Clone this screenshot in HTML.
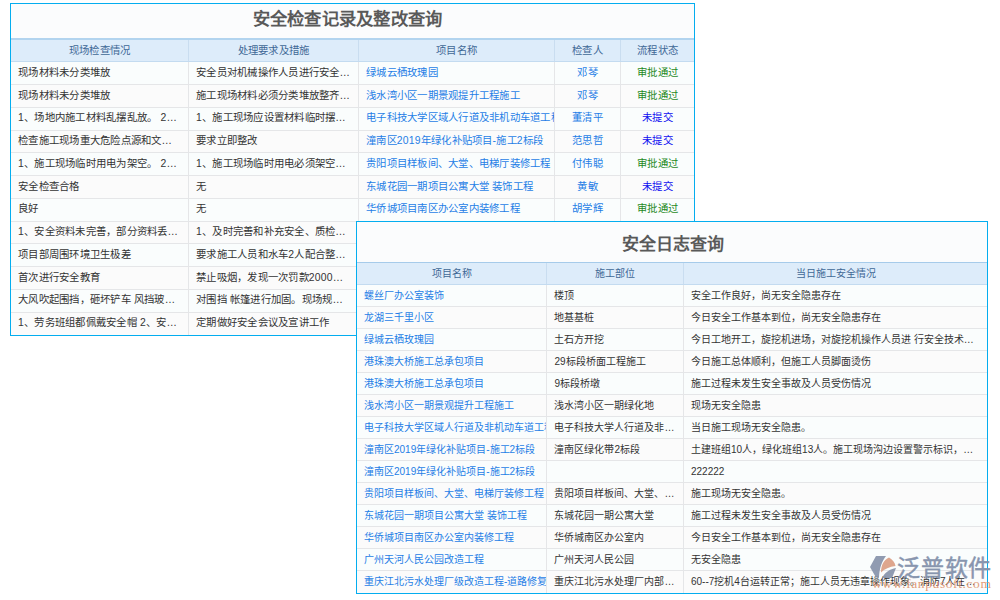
<!DOCTYPE html><html lang="zh-CN"><head><meta charset="utf-8"><style>
html,body{margin:0;padding:0;background:#fff;width:1000px;height:600px;overflow:hidden;position:relative;font-family:"Liberation Sans",sans-serif}
.p{position:absolute;box-sizing:border-box;border:1px solid #04adef;background:#fbfcfd;overflow:hidden}
.t{position:absolute;color:#595959;font-weight:bold;text-align:left;white-space:nowrap}
.h{position:absolute;color:#3f6896;text-align:center;white-space:nowrap;overflow:hidden}
.c{position:absolute;color:#333333;white-space:nowrap;overflow:hidden;box-sizing:border-box}
.lk{color:#1f7ee6}
.clip{text-overflow:clip;padding-right:0}
.ct{text-align:center}
.gr{color:#1e8a1e}
.pu{color:#0d0df0}
</style></head><body>

<div class="p" style="left:10px;top:3px;width:685px;height:333px;z-index:1">
<div class="t" style="left:241.5px;top:-5.5px;height:40px;line-height:40px;font-size:17.3px;letter-spacing:0.25px">安全检查记录及整改查询</div>
<div style="position:absolute;left:0;top:34px;width:683px;height:23.299999999999997px;background:#ddecfa;border-top:2px solid #b2d4ef;box-sizing:border-box"></div>
<div style="position:absolute;left:0;top:57.30px;width:683px;height:1px;background:#c3dbf0"></div>
<div class="h" style="left:0.00px;width:177.00px;top:35.50px;height:21.30px;line-height:21.30px;font-size:10.4px;letter-spacing:0.25px">现场检查情况</div>
<div class="h" style="left:178.00px;width:169.00px;top:35.50px;height:21.30px;line-height:21.30px;font-size:10.4px;letter-spacing:0.25px">处理要求及措施</div>
<div class="h" style="left:348.00px;width:195.00px;top:35.50px;height:21.30px;line-height:21.30px;font-size:10.4px;letter-spacing:0.25px">项目名称</div>
<div class="h" style="left:544.00px;width:65.00px;top:35.50px;height:21.30px;line-height:21.30px;font-size:10.4px;letter-spacing:0.25px">检查人</div>
<div class="h" style="left:610.00px;width:73.00px;top:35.50px;height:21.30px;line-height:21.30px;font-size:10.4px;letter-spacing:0.25px">流程状态</div>
<div style="position:absolute;left:177.00px;top:36px;width:1px;height:21.30px;background:#c9ddf0"></div>
<div style="position:absolute;left:347.00px;top:36px;width:1px;height:21.30px;background:#c9ddf0"></div>
<div style="position:absolute;left:543.00px;top:36px;width:1px;height:21.30px;background:#c9ddf0"></div>
<div style="position:absolute;left:609.00px;top:36px;width:1px;height:21.30px;background:#c9ddf0"></div>
<div style="position:absolute;left:0;top:58.30px;width:683px;height:22.75px;background:#fafdfd"></div>
<div class="c" style="left:0.00px;width:177.00px;top:57.80px;height:21.75px;line-height:21.75px;font-size:10.4px;letter-spacing:0.25px;padding-left:7px;padding-right:0">现场材料未分类堆放</div>
<div class="c" style="left:178.00px;width:169.00px;top:57.80px;height:21.75px;line-height:21.75px;font-size:10.4px;letter-spacing:0.25px;padding-left:7px;padding-right:0">安全员对机械操作人员进行安全…</div>
<div class="c lk clip" style="left:348.00px;width:195.00px;top:57.80px;height:21.75px;line-height:21.75px;font-size:10.4px;letter-spacing:0.25px;padding-left:7px;padding-right:0">绿城云栖玫瑰园</div>
<div class="c ct lk" style="left:544.00px;width:65.00px;top:57.80px;height:21.75px;line-height:21.75px;font-size:10.4px;letter-spacing:0.25px;padding-left:0px;padding-right:0">邓琴</div>
<div class="c ct gr" style="left:610.00px;width:73.00px;top:57.80px;height:21.75px;line-height:21.75px;font-size:10.4px;letter-spacing:0.25px;padding-left:0px;padding-right:0">审批通过</div>
<div style="position:absolute;left:0;top:81.05px;width:683px;height:22.75px;background:#fbfbfb"></div>
<div style="position:absolute;left:0;top:80.05px;width:683px;height:1px;background:#e5e6e8"></div>
<div class="c" style="left:0.00px;width:177.00px;top:80.55px;height:21.75px;line-height:21.75px;font-size:10.4px;letter-spacing:0.25px;padding-left:7px;padding-right:0">现场材料未分类堆放</div>
<div class="c" style="left:178.00px;width:169.00px;top:80.55px;height:21.75px;line-height:21.75px;font-size:10.4px;letter-spacing:0.25px;padding-left:7px;padding-right:0">施工现场材料必须分类堆放整齐…</div>
<div class="c lk clip" style="left:348.00px;width:195.00px;top:80.55px;height:21.75px;line-height:21.75px;font-size:10.4px;letter-spacing:0.25px;padding-left:7px;padding-right:0">浅水湾小区一期景观提升工程施工</div>
<div class="c ct lk" style="left:544.00px;width:65.00px;top:80.55px;height:21.75px;line-height:21.75px;font-size:10.4px;letter-spacing:0.25px;padding-left:0px;padding-right:0">邓琴</div>
<div class="c ct gr" style="left:610.00px;width:73.00px;top:80.55px;height:21.75px;line-height:21.75px;font-size:10.4px;letter-spacing:0.25px;padding-left:0px;padding-right:0">审批通过</div>
<div style="position:absolute;left:0;top:103.80px;width:683px;height:22.75px;background:#fafdfd"></div>
<div style="position:absolute;left:0;top:102.80px;width:683px;height:1px;background:#e5e6e8"></div>
<div class="c" style="left:0.00px;width:177.00px;top:103.30px;height:21.75px;line-height:21.75px;font-size:10.4px;letter-spacing:0.25px;padding-left:7px;padding-right:0">1、场地内施工材料乱摆乱放。 2…</div>
<div class="c" style="left:178.00px;width:169.00px;top:103.30px;height:21.75px;line-height:21.75px;font-size:10.4px;letter-spacing:0.25px;padding-left:7px;padding-right:0">1、施工现场应设置材料临时摆…</div>
<div class="c lk clip" style="left:348.00px;width:195.00px;top:103.30px;height:21.75px;line-height:21.75px;font-size:10.4px;letter-spacing:0.25px;padding-left:7px;padding-right:0">电子科技大学区域人行道及非机动车道工程</div>
<div class="c ct lk" style="left:544.00px;width:65.00px;top:103.30px;height:21.75px;line-height:21.75px;font-size:10.4px;letter-spacing:0.25px;padding-left:0px;padding-right:0">董清平</div>
<div class="c ct pu" style="left:610.00px;width:73.00px;top:103.30px;height:21.75px;line-height:21.75px;font-size:10.4px;letter-spacing:0.25px;padding-left:0px;padding-right:0">未提交</div>
<div style="position:absolute;left:0;top:126.55px;width:683px;height:22.75px;background:#fbfbfb"></div>
<div style="position:absolute;left:0;top:125.55px;width:683px;height:1px;background:#e5e6e8"></div>
<div class="c" style="left:0.00px;width:177.00px;top:126.05px;height:21.75px;line-height:21.75px;font-size:10.4px;letter-spacing:0.25px;padding-left:7px;padding-right:0">检查施工现场重大危险点源和文…</div>
<div class="c" style="left:178.00px;width:169.00px;top:126.05px;height:21.75px;line-height:21.75px;font-size:10.4px;letter-spacing:0.25px;padding-left:7px;padding-right:0">要求立即整改</div>
<div class="c lk clip" style="left:348.00px;width:195.00px;top:126.05px;height:21.75px;line-height:21.75px;font-size:10.4px;letter-spacing:0.25px;padding-left:7px;padding-right:0">潼南区2019年绿化补贴项目-施工2标段</div>
<div class="c ct lk" style="left:544.00px;width:65.00px;top:126.05px;height:21.75px;line-height:21.75px;font-size:10.4px;letter-spacing:0.25px;padding-left:0px;padding-right:0">范思哲</div>
<div class="c ct pu" style="left:610.00px;width:73.00px;top:126.05px;height:21.75px;line-height:21.75px;font-size:10.4px;letter-spacing:0.25px;padding-left:0px;padding-right:0">未提交</div>
<div style="position:absolute;left:0;top:149.30px;width:683px;height:22.75px;background:#fafdfd"></div>
<div style="position:absolute;left:0;top:148.30px;width:683px;height:1px;background:#e5e6e8"></div>
<div class="c" style="left:0.00px;width:177.00px;top:148.80px;height:21.75px;line-height:21.75px;font-size:10.4px;letter-spacing:0.25px;padding-left:7px;padding-right:0">1、施工现场临时用电为架空。 2…</div>
<div class="c" style="left:178.00px;width:169.00px;top:148.80px;height:21.75px;line-height:21.75px;font-size:10.4px;letter-spacing:0.25px;padding-left:7px;padding-right:0">1、施工现场临时用电必须架空…</div>
<div class="c lk clip" style="left:348.00px;width:195.00px;top:148.80px;height:21.75px;line-height:21.75px;font-size:10.4px;letter-spacing:0.25px;padding-left:7px;padding-right:0">贵阳项目样板间、大堂、电梯厅装修工程</div>
<div class="c ct lk" style="left:544.00px;width:65.00px;top:148.80px;height:21.75px;line-height:21.75px;font-size:10.4px;letter-spacing:0.25px;padding-left:0px;padding-right:0">付伟聪</div>
<div class="c ct gr" style="left:610.00px;width:73.00px;top:148.80px;height:21.75px;line-height:21.75px;font-size:10.4px;letter-spacing:0.25px;padding-left:0px;padding-right:0">审批通过</div>
<div style="position:absolute;left:0;top:172.05px;width:683px;height:22.75px;background:#fbfbfb"></div>
<div style="position:absolute;left:0;top:171.05px;width:683px;height:1px;background:#e5e6e8"></div>
<div class="c" style="left:0.00px;width:177.00px;top:171.55px;height:21.75px;line-height:21.75px;font-size:10.4px;letter-spacing:0.25px;padding-left:7px;padding-right:0">安全检查合格</div>
<div class="c" style="left:178.00px;width:169.00px;top:171.55px;height:21.75px;line-height:21.75px;font-size:10.4px;letter-spacing:0.25px;padding-left:7px;padding-right:0">无</div>
<div class="c lk clip" style="left:348.00px;width:195.00px;top:171.55px;height:21.75px;line-height:21.75px;font-size:10.4px;letter-spacing:0.25px;padding-left:7px;padding-right:0">东城花园一期项目公寓大堂 装饰工程</div>
<div class="c ct lk" style="left:544.00px;width:65.00px;top:171.55px;height:21.75px;line-height:21.75px;font-size:10.4px;letter-spacing:0.25px;padding-left:0px;padding-right:0">黄敏</div>
<div class="c ct pu" style="left:610.00px;width:73.00px;top:171.55px;height:21.75px;line-height:21.75px;font-size:10.4px;letter-spacing:0.25px;padding-left:0px;padding-right:0">未提交</div>
<div style="position:absolute;left:0;top:194.80px;width:683px;height:22.75px;background:#fafdfd"></div>
<div style="position:absolute;left:0;top:193.80px;width:683px;height:1px;background:#e5e6e8"></div>
<div class="c" style="left:0.00px;width:177.00px;top:194.30px;height:21.75px;line-height:21.75px;font-size:10.4px;letter-spacing:0.25px;padding-left:7px;padding-right:0">良好</div>
<div class="c" style="left:178.00px;width:169.00px;top:194.30px;height:21.75px;line-height:21.75px;font-size:10.4px;letter-spacing:0.25px;padding-left:7px;padding-right:0">无</div>
<div class="c lk clip" style="left:348.00px;width:195.00px;top:194.30px;height:21.75px;line-height:21.75px;font-size:10.4px;letter-spacing:0.25px;padding-left:7px;padding-right:0">华侨城项目南区办公室内装修工程</div>
<div class="c ct lk" style="left:544.00px;width:65.00px;top:194.30px;height:21.75px;line-height:21.75px;font-size:10.4px;letter-spacing:0.25px;padding-left:0px;padding-right:0">胡学辉</div>
<div class="c ct gr" style="left:610.00px;width:73.00px;top:194.30px;height:21.75px;line-height:21.75px;font-size:10.4px;letter-spacing:0.25px;padding-left:0px;padding-right:0">审批通过</div>
<div style="position:absolute;left:0;top:217.55px;width:683px;height:22.75px;background:#fbfbfb"></div>
<div style="position:absolute;left:0;top:216.55px;width:683px;height:1px;background:#e5e6e8"></div>
<div class="c" style="left:0.00px;width:177.00px;top:217.05px;height:21.75px;line-height:21.75px;font-size:10.4px;letter-spacing:0.25px;padding-left:7px;padding-right:0">1、安全资料未完善，部分资料丢…</div>
<div class="c" style="left:178.00px;width:169.00px;top:217.05px;height:21.75px;line-height:21.75px;font-size:10.4px;letter-spacing:0.25px;padding-left:7px;padding-right:0">1、及时完善和补充安全、质检…</div>
<div style="position:absolute;left:0;top:240.30px;width:683px;height:22.75px;background:#fafdfd"></div>
<div style="position:absolute;left:0;top:239.30px;width:683px;height:1px;background:#e5e6e8"></div>
<div class="c" style="left:0.00px;width:177.00px;top:239.80px;height:21.75px;line-height:21.75px;font-size:10.4px;letter-spacing:0.25px;padding-left:7px;padding-right:0">项目部周围环境卫生极差</div>
<div class="c" style="left:178.00px;width:169.00px;top:239.80px;height:21.75px;line-height:21.75px;font-size:10.4px;letter-spacing:0.25px;padding-left:7px;padding-right:0">要求施工人员和水车2人配合整…</div>
<div style="position:absolute;left:0;top:263.05px;width:683px;height:22.75px;background:#fbfbfb"></div>
<div style="position:absolute;left:0;top:262.05px;width:683px;height:1px;background:#e5e6e8"></div>
<div class="c" style="left:0.00px;width:177.00px;top:262.55px;height:21.75px;line-height:21.75px;font-size:10.4px;letter-spacing:0.25px;padding-left:7px;padding-right:0">首次进行安全教育</div>
<div class="c" style="left:178.00px;width:169.00px;top:262.55px;height:21.75px;line-height:21.75px;font-size:10.4px;letter-spacing:0.25px;padding-left:7px;padding-right:0">禁止吸烟，发现一次罚款2000…</div>
<div style="position:absolute;left:0;top:285.80px;width:683px;height:22.75px;background:#fafdfd"></div>
<div style="position:absolute;left:0;top:284.80px;width:683px;height:1px;background:#e5e6e8"></div>
<div class="c" style="left:0.00px;width:177.00px;top:285.30px;height:21.75px;line-height:21.75px;font-size:10.4px;letter-spacing:0.25px;padding-left:7px;padding-right:0">大风吹起围挡，砸坏铲车 风挡玻…</div>
<div class="c" style="left:178.00px;width:169.00px;top:285.30px;height:21.75px;line-height:21.75px;font-size:10.4px;letter-spacing:0.25px;padding-left:7px;padding-right:0">对围挡 帐篷进行加固。现场规…</div>
<div style="position:absolute;left:0;top:308.55px;width:683px;height:22.75px;background:#fbfbfb"></div>
<div style="position:absolute;left:0;top:307.55px;width:683px;height:1px;background:#e5e6e8"></div>
<div class="c" style="left:0.00px;width:177.00px;top:308.05px;height:21.75px;line-height:21.75px;font-size:10.4px;letter-spacing:0.25px;padding-left:7px;padding-right:0">1、劳务班组都佩戴安全帽 2、安…</div>
<div class="c" style="left:178.00px;width:169.00px;top:308.05px;height:21.75px;line-height:21.75px;font-size:10.4px;letter-spacing:0.25px;padding-left:7px;padding-right:0">定期做好安全会议及宣讲工作</div>
<div style="position:absolute;left:177.00px;top:58.30px;width:1px;height:272.70px;background:#e5e6e8"></div>
<div style="position:absolute;left:347.00px;top:58.30px;width:1px;height:272.70px;background:#e5e6e8"></div>
<div style="position:absolute;left:543.00px;top:58.30px;width:1px;height:272.70px;background:#e5e6e8"></div>
<div style="position:absolute;left:609.00px;top:58.30px;width:1px;height:272.70px;background:#e5e6e8"></div>
</div>
<div class="p" style="left:356px;top:221px;width:632px;height:373px;z-index:2">
<div class="t" style="left:265px;top:2.5px;height:40px;line-height:40px;font-size:17px;letter-spacing:0px">安全日志查询</div>
<div style="position:absolute;left:0;top:40px;width:630px;height:22.30000000000001px;background:#ddecfa;border-top:1px solid #a6cbea;box-sizing:border-box"></div>
<div style="position:absolute;left:0;top:62.30px;width:630px;height:1px;background:#c3dbf0"></div>
<div class="h" style="left:0.00px;width:189.40px;top:41.00px;height:21.30px;line-height:21.30px;font-size:10px;letter-spacing:0.0px">项目名称</div>
<div class="h" style="left:190.40px;width:135.60px;top:41.00px;height:21.30px;line-height:21.30px;font-size:10px;letter-spacing:0.0px">施工部位</div>
<div class="h" style="left:327.00px;width:303.00px;top:41.00px;height:21.30px;line-height:21.30px;font-size:10px;letter-spacing:0.0px">当日施工安全情况</div>
<div style="position:absolute;left:189.40px;top:41px;width:1px;height:21.30px;background:#c9ddf0"></div>
<div style="position:absolute;left:326.00px;top:41px;width:1px;height:21.30px;background:#c9ddf0"></div>
<div style="position:absolute;left:0;top:63.30px;width:630px;height:22.00px;background:#fafdfd"></div>
<div class="c lk clip" style="left:0.00px;width:189.40px;top:63.30px;height:21.00px;line-height:21.00px;font-size:10px;letter-spacing:0.0px;padding-left:7px;padding-right:0">螺丝厂办公室装饰</div>
<div class="c" style="left:190.40px;width:135.60px;top:63.30px;height:21.00px;line-height:21.00px;font-size:10px;letter-spacing:0.0px;padding-left:7px;padding-right:0">楼顶</div>
<div class="c" style="left:327.00px;width:303.00px;top:63.30px;height:21.00px;line-height:21.00px;font-size:10px;letter-spacing:0.0px;padding-left:7px;padding-right:0">安全工作良好，尚无安全隐患存在</div>
<div style="position:absolute;left:0;top:85.30px;width:630px;height:22.00px;background:#fbfbfb"></div>
<div style="position:absolute;left:0;top:84.30px;width:630px;height:1px;background:#e5e6e8"></div>
<div class="c lk clip" style="left:0.00px;width:189.40px;top:85.30px;height:21.00px;line-height:21.00px;font-size:10px;letter-spacing:0.0px;padding-left:7px;padding-right:0">龙湖三千里小区</div>
<div class="c" style="left:190.40px;width:135.60px;top:85.30px;height:21.00px;line-height:21.00px;font-size:10px;letter-spacing:0.0px;padding-left:7px;padding-right:0">地基基桩</div>
<div class="c" style="left:327.00px;width:303.00px;top:85.30px;height:21.00px;line-height:21.00px;font-size:10px;letter-spacing:0.0px;padding-left:7px;padding-right:0">今日安全工作基本到位，尚无安全隐患存在</div>
<div style="position:absolute;left:0;top:107.30px;width:630px;height:22.00px;background:#fafdfd"></div>
<div style="position:absolute;left:0;top:106.30px;width:630px;height:1px;background:#e5e6e8"></div>
<div class="c lk clip" style="left:0.00px;width:189.40px;top:107.30px;height:21.00px;line-height:21.00px;font-size:10px;letter-spacing:0.0px;padding-left:7px;padding-right:0">绿城云栖玫瑰园</div>
<div class="c" style="left:190.40px;width:135.60px;top:107.30px;height:21.00px;line-height:21.00px;font-size:10px;letter-spacing:0.0px;padding-left:7px;padding-right:0">土石方开挖</div>
<div class="c" style="left:327.00px;width:303.00px;top:107.30px;height:21.00px;line-height:21.00px;font-size:10px;letter-spacing:0.0px;padding-left:7px;padding-right:0">今日工地开工，旋挖机进场，对旋挖机操作人员进 行安全技术…</div>
<div style="position:absolute;left:0;top:129.30px;width:630px;height:22.00px;background:#fbfbfb"></div>
<div style="position:absolute;left:0;top:128.30px;width:630px;height:1px;background:#e5e6e8"></div>
<div class="c lk clip" style="left:0.00px;width:189.40px;top:129.30px;height:21.00px;line-height:21.00px;font-size:10px;letter-spacing:0.0px;padding-left:7px;padding-right:0">港珠澳大桥施工总承包项目</div>
<div class="c" style="left:190.40px;width:135.60px;top:129.30px;height:21.00px;line-height:21.00px;font-size:10px;letter-spacing:0.0px;padding-left:7px;padding-right:0">29标段桥面工程施工</div>
<div class="c" style="left:327.00px;width:303.00px;top:129.30px;height:21.00px;line-height:21.00px;font-size:10px;letter-spacing:0.0px;padding-left:7px;padding-right:0">今日施工总体顺利，但施工人员脚面烫伤</div>
<div style="position:absolute;left:0;top:151.30px;width:630px;height:22.00px;background:#fafdfd"></div>
<div style="position:absolute;left:0;top:150.30px;width:630px;height:1px;background:#e5e6e8"></div>
<div class="c lk clip" style="left:0.00px;width:189.40px;top:151.30px;height:21.00px;line-height:21.00px;font-size:10px;letter-spacing:0.0px;padding-left:7px;padding-right:0">港珠澳大桥施工总承包项目</div>
<div class="c" style="left:190.40px;width:135.60px;top:151.30px;height:21.00px;line-height:21.00px;font-size:10px;letter-spacing:0.0px;padding-left:7px;padding-right:0">9标段桥墩</div>
<div class="c" style="left:327.00px;width:303.00px;top:151.30px;height:21.00px;line-height:21.00px;font-size:10px;letter-spacing:0.0px;padding-left:7px;padding-right:0">施工过程未发生安全事故及人员受伤情况</div>
<div style="position:absolute;left:0;top:173.30px;width:630px;height:22.00px;background:#fbfbfb"></div>
<div style="position:absolute;left:0;top:172.30px;width:630px;height:1px;background:#e5e6e8"></div>
<div class="c lk clip" style="left:0.00px;width:189.40px;top:173.30px;height:21.00px;line-height:21.00px;font-size:10px;letter-spacing:0.0px;padding-left:7px;padding-right:0">浅水湾小区一期景观提升工程施工</div>
<div class="c" style="left:190.40px;width:135.60px;top:173.30px;height:21.00px;line-height:21.00px;font-size:10px;letter-spacing:0.0px;padding-left:7px;padding-right:0">浅水湾小区一期绿化地</div>
<div class="c" style="left:327.00px;width:303.00px;top:173.30px;height:21.00px;line-height:21.00px;font-size:10px;letter-spacing:0.0px;padding-left:7px;padding-right:0">现场无安全隐患</div>
<div style="position:absolute;left:0;top:195.30px;width:630px;height:22.00px;background:#fafdfd"></div>
<div style="position:absolute;left:0;top:194.30px;width:630px;height:1px;background:#e5e6e8"></div>
<div class="c lk clip" style="left:0.00px;width:189.40px;top:195.30px;height:21.00px;line-height:21.00px;font-size:10px;letter-spacing:0.0px;padding-left:7px;padding-right:0">电子科技大学区域人行道及非机动车道工程</div>
<div class="c" style="left:190.40px;width:135.60px;top:195.30px;height:21.00px;line-height:21.00px;font-size:10px;letter-spacing:0.0px;padding-left:7px;padding-right:0">电子科技大学人行道及非…</div>
<div class="c" style="left:327.00px;width:303.00px;top:195.30px;height:21.00px;line-height:21.00px;font-size:10px;letter-spacing:0.0px;padding-left:7px;padding-right:0">当日施工现场无安全隐患。</div>
<div style="position:absolute;left:0;top:217.30px;width:630px;height:22.00px;background:#fbfbfb"></div>
<div style="position:absolute;left:0;top:216.30px;width:630px;height:1px;background:#e5e6e8"></div>
<div class="c lk clip" style="left:0.00px;width:189.40px;top:217.30px;height:21.00px;line-height:21.00px;font-size:10px;letter-spacing:0.0px;padding-left:7px;padding-right:0">潼南区2019年绿化补贴项目-施工2标段</div>
<div class="c" style="left:190.40px;width:135.60px;top:217.30px;height:21.00px;line-height:21.00px;font-size:10px;letter-spacing:0.0px;padding-left:7px;padding-right:0">潼南区绿化带2标段</div>
<div class="c" style="left:327.00px;width:303.00px;top:217.30px;height:21.00px;line-height:21.00px;font-size:10px;letter-spacing:0.0px;padding-left:7px;padding-right:0">土建班组10人，绿化班组13人。施工现场沟边设置警示标识，…</div>
<div style="position:absolute;left:0;top:239.30px;width:630px;height:22.00px;background:#fafdfd"></div>
<div style="position:absolute;left:0;top:238.30px;width:630px;height:1px;background:#e5e6e8"></div>
<div class="c lk clip" style="left:0.00px;width:189.40px;top:239.30px;height:21.00px;line-height:21.00px;font-size:10px;letter-spacing:0.0px;padding-left:7px;padding-right:0">潼南区2019年绿化补贴项目-施工2标段</div>
<div class="c" style="left:190.40px;width:135.60px;top:239.30px;height:21.00px;line-height:21.00px;font-size:10px;letter-spacing:0.0px;padding-left:7px;padding-right:0"></div>
<div class="c" style="left:327.00px;width:303.00px;top:239.30px;height:21.00px;line-height:21.00px;font-size:10px;letter-spacing:0.0px;padding-left:7px;padding-right:0">222222</div>
<div style="position:absolute;left:0;top:261.30px;width:630px;height:22.00px;background:#fbfbfb"></div>
<div style="position:absolute;left:0;top:260.30px;width:630px;height:1px;background:#e5e6e8"></div>
<div class="c lk clip" style="left:0.00px;width:189.40px;top:261.30px;height:21.00px;line-height:21.00px;font-size:10px;letter-spacing:0.0px;padding-left:7px;padding-right:0">贵阳项目样板间、大堂、电梯厅装修工程</div>
<div class="c" style="left:190.40px;width:135.60px;top:261.30px;height:21.00px;line-height:21.00px;font-size:10px;letter-spacing:0.0px;padding-left:7px;padding-right:0">贵阳项目样板间、大堂、…</div>
<div class="c" style="left:327.00px;width:303.00px;top:261.30px;height:21.00px;line-height:21.00px;font-size:10px;letter-spacing:0.0px;padding-left:7px;padding-right:0">施工现场无安全隐患。</div>
<div style="position:absolute;left:0;top:283.30px;width:630px;height:22.00px;background:#fafdfd"></div>
<div style="position:absolute;left:0;top:282.30px;width:630px;height:1px;background:#e5e6e8"></div>
<div class="c lk clip" style="left:0.00px;width:189.40px;top:283.30px;height:21.00px;line-height:21.00px;font-size:10px;letter-spacing:0.0px;padding-left:7px;padding-right:0">东城花园一期项目公寓大堂 装饰工程</div>
<div class="c" style="left:190.40px;width:135.60px;top:283.30px;height:21.00px;line-height:21.00px;font-size:10px;letter-spacing:0.0px;padding-left:7px;padding-right:0">东城花园一期公寓大堂</div>
<div class="c" style="left:327.00px;width:303.00px;top:283.30px;height:21.00px;line-height:21.00px;font-size:10px;letter-spacing:0.0px;padding-left:7px;padding-right:0">施工过程未发生安全事故及人员受伤情况</div>
<div style="position:absolute;left:0;top:305.30px;width:630px;height:22.00px;background:#fbfbfb"></div>
<div style="position:absolute;left:0;top:304.30px;width:630px;height:1px;background:#e5e6e8"></div>
<div class="c lk clip" style="left:0.00px;width:189.40px;top:305.30px;height:21.00px;line-height:21.00px;font-size:10px;letter-spacing:0.0px;padding-left:7px;padding-right:0">华侨城项目南区办公室内装修工程</div>
<div class="c" style="left:190.40px;width:135.60px;top:305.30px;height:21.00px;line-height:21.00px;font-size:10px;letter-spacing:0.0px;padding-left:7px;padding-right:0">华侨城南区办公室内</div>
<div class="c" style="left:327.00px;width:303.00px;top:305.30px;height:21.00px;line-height:21.00px;font-size:10px;letter-spacing:0.0px;padding-left:7px;padding-right:0">今日安全工作基本到位，尚无安全隐患存在</div>
<div style="position:absolute;left:0;top:327.30px;width:630px;height:22.00px;background:#fafdfd"></div>
<div style="position:absolute;left:0;top:326.30px;width:630px;height:1px;background:#e5e6e8"></div>
<div class="c lk clip" style="left:0.00px;width:189.40px;top:327.30px;height:21.00px;line-height:21.00px;font-size:10px;letter-spacing:0.0px;padding-left:7px;padding-right:0">广州天河人民公园改造工程</div>
<div class="c" style="left:190.40px;width:135.60px;top:327.30px;height:21.00px;line-height:21.00px;font-size:10px;letter-spacing:0.0px;padding-left:7px;padding-right:0">广州天河人民公园</div>
<div class="c" style="left:327.00px;width:303.00px;top:327.30px;height:21.00px;line-height:21.00px;font-size:10px;letter-spacing:0.0px;padding-left:7px;padding-right:0">无安全隐患</div>
<div style="position:absolute;left:0;top:349.30px;width:630px;height:22.00px;background:#fbfbfb"></div>
<div style="position:absolute;left:0;top:348.30px;width:630px;height:1px;background:#e5e6e8"></div>
<div class="c lk clip" style="left:0.00px;width:189.40px;top:349.30px;height:21.00px;line-height:21.00px;font-size:10px;letter-spacing:0.0px;padding-left:7px;padding-right:0">重庆江北污水处理厂级改造工程-道路修复</div>
<div class="c" style="left:190.40px;width:135.60px;top:349.30px;height:21.00px;line-height:21.00px;font-size:10px;letter-spacing:0.0px;padding-left:7px;padding-right:0">重庆江北污水处理厂内部…</div>
<div class="c" style="left:327.00px;width:303.00px;top:349.30px;height:21.00px;line-height:21.00px;font-size:10px;letter-spacing:0.0px;padding-left:7px;padding-right:0">60--7挖机4台运转正常；施工人员无违章操作现象。消防7人在…</div>
<div style="position:absolute;left:189.40px;top:63.30px;width:1px;height:307.70px;background:#e5e6e8"></div>
<div style="position:absolute;left:326.00px;top:63.30px;width:1px;height:307.70px;background:#e5e6e8"></div>
</div>
<svg style="position:absolute;left:0;top:0;z-index:5" width="1000" height="600" viewBox="0 0 1000 600">
<g opacity="0.92">
<path d="M876,556 L886,556 C882,561 879.5,568 879,577.5 L876,577.5 L870,567 Z" fill="#8893ab"/>
<path d="M881,572.5 C881,565 884,559.5 889,557.5 C892.5,559.5 895,562.5 895.5,566 C889.5,566.5 884.5,569 881,572.5 Z" fill="#dc9f84"/>
<path d="M882,578 C885,572 890,569 896,568 L892,578 Z" fill="#8893ab"/>
</g>
<text x="897" y="575.5" font-family="Liberation Sans, sans-serif" font-size="23" fill="#8391ab" stroke="#8391ab" stroke-width="0.45" fill-opacity="0.95" letter-spacing="0.8">泛普软件</text>
<text x="872" y="587.5" font-family="Liberation Serif, serif" font-size="13.5" fill="#e0956f" fill-opacity="0.95" letter-spacing="0.6">www.fanpusoft.com</text>
</svg>
</body></html>
